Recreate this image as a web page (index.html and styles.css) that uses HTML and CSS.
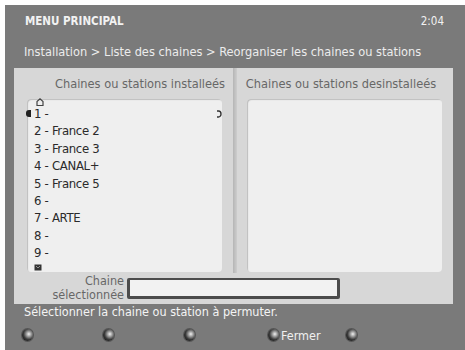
FILE: index.html
```html
<!DOCTYPE html>
<html>
<head>
<meta charset="utf-8">
<link rel="stylesheet" href="styles.css">
</head>
<body>
<div class="screen">
  <div class="titlebar">
    <span class="title">MENU PRINCIPAL</span>
    <span class="clock">2:04</span>
  </div>
  <div class="crumb">Installation &gt; Liste des chaines &gt; Reorganiser les chaines ou stations</div>
  <div class="panel">
    <div class="cols">
      <div class="col left">
        <div class="head">Chaines ou stations installeés</div>
        <div class="box">
          <svg class="up" width="8" height="8" viewBox="0 0 8 8"><path d="M1 7.5V3.5L4 0.8L7 3.5V7.5Z" fill="none" stroke="#444" stroke-width="1.2"/></svg>
          <ul class="list">
            <li class="sel"><span class="cursor"></span>1 -<svg class="scroll" width="6" height="8" viewBox="0 0 6 8"><path d="M1 1H2.5A2.5 3 0 0 1 2.5 7H1" fill="none" stroke="#333" stroke-width="1.4"/></svg></li>
            <li>2 - France 2</li>
            <li>3 - France 3</li>
            <li>4 - CANAL+</li>
            <li>5 - France 5</li>
            <li>6 -</li>
            <li>7 - ARTE</li>
            <li>8 -</li>
            <li>9 -</li>
          </ul>
          <svg class="down" width="8" height="7" viewBox="0 0 8 7"><path d="M0.5 0.5H7.5V6.5H0.5Z" fill="#333"/><path d="M2 2L4 4L6 2" fill="none" stroke="#aaa" stroke-width="0.8"/></svg>
        </div>
      </div>
      <div class="divider"></div>
      <div class="col right">
        <div class="head">Chaines ou stations desinstalleés</div>
        <div class="box"></div>
      </div>
    </div>
    <div class="selrow">
      <div class="sellabel">Chaine<br>sélectionnée</div>
      <div class="selinput"></div>
    </div>
  </div>
  <div class="hint">Sélectionner la chaine ou station à permuter.</div>
  <div class="buttons">
    <span class="btn"><span class="dot"></span></span>
    <span class="btn"><span class="dot"></span></span>
    <span class="btn"><span class="dot"></span></span>
    <span class="btn"><span class="dot"></span>Fermer</span>
    <span class="btn"><span class="dot"></span></span>
  </div>
</div>
</body>
</html>
```
FILE: styles.css
```css
html, body {
  margin: 0;
  padding: 0;
  background: #ffffff;
}
body {
  font-family: "DejaVu Sans Condensed", "DejaVu Sans", sans-serif;
  font-stretch: condensed;
}
.screen {
  margin: 5px 0 0 5px;
  width: 460px;
  height: 345px;
  background: #7a7a7a;
  box-sizing: border-box;
  padding-top: 8px;
  display: flex;
  flex-direction: column;
  overflow: hidden;
}
.titlebar {
  display: flex;
  justify-content: space-between;
  align-items: center;
  height: 16px;
  padding: 0 21px 0 20px;
  color: #f2f2f2;
  font-size: 11.5px;
  font-weight: bold;
}
.clock {
  font-weight: normal;
  font-size: 11.5px;
}
.crumb {
  margin-top: 15px;
  height: 16px;
  line-height: 16px;
  padding-left: 19px;
  color: #ececec;
  font-size: 12.7px;
}
.panel {
  margin: 8px 0 0 9px;
  width: 439px;
  height: 236px;
  background: #d7d7d7;
  box-sizing: border-box;
  display: flex;
  flex-direction: column;
}
.cols {
  display: flex;
  height: 205px;
}
.col {
  display: flex;
  flex-direction: column;
}
.left {
  width: 219px;
  padding-left: 13px;
  box-sizing: border-box;
}
.right {
  flex: 1;
  padding-left: 10px;
  box-sizing: border-box;
}
.divider {
  width: 4px;
  background: linear-gradient(to right, #b5b5b5, #cdcdcd);
}
.head {
  height: 31px;
  line-height: 31px;
  text-align: center;
  color: #676767;
  font-size: 12.7px;
  padding-left: 20px;
}
.right .head {
  padding-left: 0;
  padding-right: 8px;
  margin-left: -10px;
}
.box {
  background: #efefef;
  border-radius: 4px;
  box-shadow: inset 1px 1px 1px #bdbdbd;
  height: 173px;
  width: 195px;
  box-sizing: border-box;
  position: relative;
}
.up {
  position: absolute;
  left: 9px;
  top: -1px;
}
.down {
  position: absolute;
  left: 7px;
  top: 165px;
}
.list {
  list-style: none;
  margin: 0;
  padding: 6px 0 0 7px;
  font-size: 13px;
  color: #2a2a2a;
  letter-spacing: -0.3px;
}
.list li {
  height: 17.4px;
  line-height: 17.4px;
  position: relative;
}
.cursor {
  position: absolute;
  left: -8px;
  top: 5px;
  width: 5px;
  height: 7px;
  background: #222;
  border-radius: 3px 0 0 3px;
}
.scroll {
  position: absolute;
  right: 0;
  top: 5px;
}
.selrow {
  display: flex;
  align-items: center;
  margin-top: 1px;
}
.sellabel {
  width: 110px;
  text-align: right;
  color: #676767;
  font-size: 12.5px;
  line-height: 14px;
}
.selinput {
  margin-left: 3px;
  width: 213px;
  height: 21px;
  box-sizing: border-box;
  border: 3px solid #4c4c4c;
  border-top-width: 2px;
  background: #f2f2f2;
  border-radius: 2px;
}
.hint {
  margin-top: 0;
  padding-left: 19px;
  height: 16px;
  line-height: 16px;
  color: #f4f4f4;
  font-size: 12.5px;
}
.buttons {
  display: flex;
  align-items: center;
  height: 22px;
  padding-left: 17px;
  margin-top: 4px;
}
.btn {
  display: flex;
  align-items: center;
  color: #f0f0f0;
  font-size: 12.5px;
  width: 81px;
}
.btn:nth-child(3) { width: 84px; }
.btn:nth-child(4) { width: 78px; }
.dot {
  width: 11px;
  height: 12px;
  border-radius: 50%;
  background: radial-gradient(ellipse at 62% 42%, #f0f0f0 0, #a8a8a8 22%, #3a3a3a 55%, #141414 85%);
  box-shadow: 0 0 0 1px #555;
  margin-right: 2px;
}
```
